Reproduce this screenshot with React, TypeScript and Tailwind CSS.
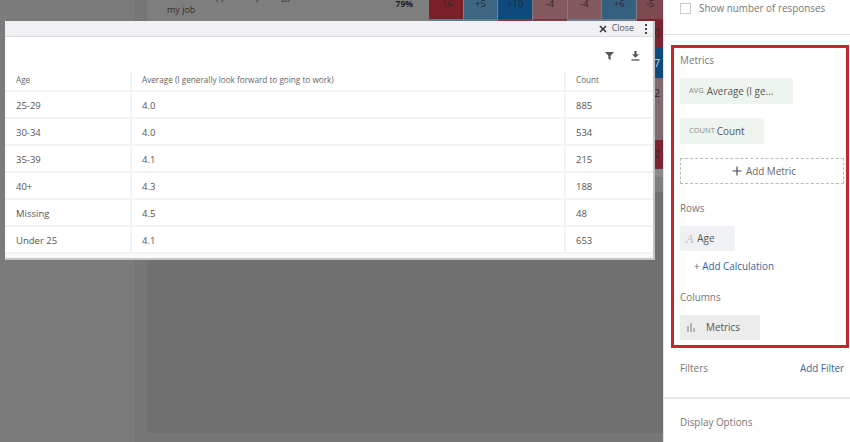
const rows = [
  ["25-29", "4.0", "885"],
  ["30-34", "4.0", "534"],
  ["35-39", "4.1", "215"],
  ["40+", "4.3", "188"],
  ["Missing", "4.5", "48"],
  ["Under 25", "4.1", "653"],
];

const topCells = [
  { t: "-16", c: "flex-1 bg-[#7b2029]" },
  { t: "+5", c: "flex-1 bg-[#3e6682]" },
  { t: "+10", c: "flex-1 bg-[#0e4a7e]" },
  { t: "-4", c: "flex-1 bg-[#82595e]" },
  { t: "-4", c: "flex-1 bg-[#82595e]" },
  { t: "+6", c: "flex-1 bg-[#35607f]" },
  { t: "-5", c: "w-[26px] bg-[#7d4a52]" },
];

const secondCells = ["bg-[#5f7c8c]", "bg-[#5f7c8c]", "bg-[#7b3a44]", "bg-[#7b3a44]", "bg-[#6c7e8a]", "bg-[#6c7e8a]"];

const sideCells = [
  { t: "0", c: "h-[29px] bg-[#7b2432] text-[#2a2a2a]" },
  { t: "7", c: "h-[30px] bg-[#0e4a7e] text-[#d8d8d8]" },
  { t: "2", c: "h-[31px] bg-[#806a6e] text-[#2a2a2a]" },
  { t: "", c: "h-[31px] bg-[#806a6e] text-[#2a2a2a]" },
  { t: "2", c: "h-[29px] bg-[#7b2432] text-[#2a2a2a]" },
  { t: "", c: "h-[8px] bg-[#8a8a8a]" },
];

function FilterIcon() {
  return (
    <svg width="9" height="8" viewBox="0 0 9 8" className="block mt-[1px]">
      <path d="M0 0h9L5.6 3.8V8L3.4 6.8V3.8z" fill="#555" />
    </svg>
  );
}

function DownloadIcon() {
  return (
    <svg width="9" height="10" viewBox="0 0 9 10" className="block">
      <path d="M3.4 0h2.2v3.2H8L4.5 6.8 1 3.2h2.4z" fill="#555" />
      <rect x="0.5" y="8.3" width="8" height="1.3" fill="#555" />
    </svg>
  );
}

function CloseIcon() {
  return (
    <svg width="8" height="8" viewBox="0 0 8 8" className="block">
      <path d="M1 1l6 6M7 1L1 7" stroke="#333" strokeWidth="1.5" />
    </svg>
  );
}

function PlusIcon() {
  return (
    <svg width="10" height="10" viewBox="0 0 10 10" className="block">
      <path d="M5 0.5v9M0.5 5h9" stroke="#444" strokeWidth="1.1" />
    </svg>
  );
}

function BarsIcon() {
  return (
    <svg width="8" height="9" viewBox="0 0 8 9" className="block">
      <rect x="0" y="3" width="2" height="6" fill="#b5b5b5" />
      <rect x="3" y="0" width="2" height="9" fill="#b5b5b5" />
      <rect x="6" y="5" width="2" height="4" fill="#b5b5b5" />
    </svg>
  );
}

function Row({ cells, header }: { cells: string[]; header?: boolean }) {
  const h = header ? "h-[22px] pt-[1px] text-[8.2px] text-[#666]" : "h-[27px] pt-[3px] text-[9.5px] text-[#555]";
  const line = header ? "" : "-mt-[3px] pt-[3px]";
  return (
    <div className={`flex border-b-2 border-[#f3f3f3] ${h}`}>
      <div className={`w-[127px] pl-[11px] flex items-center border-r-2 border-[#f3f3f3] ${line}`}>{cells[0]}</div>
      <div className={`w-[434px] pl-[10px] flex items-center border-r-2 border-[#f3f3f3] ${line}`}>{cells[1]}</div>
      <div className="flex-1 pl-[10px] flex items-center">{cells[2]}</div>
    </div>
  );
}

export default function App() {
  return (
    <div className="relative h-[442px] w-[850px] overflow-hidden flex font-['Open_Sans',sans-serif]">
      <div className="flex flex-1">
        <div className="w-[136px] bg-[#7b7b7b] border-r border-[#727272]" />
        <div className="flex-1 bg-[#767676] pl-[11px] pb-[9px]">
          <div className="h-full bg-[#707070]">
            <div className="h-[192px] bg-[#7e7e7e] flex justify-end">
              <div className="flex-1 h-[19px] overflow-hidden pl-[20px] flex justify-between pr-[16px]">
                <div className="text-[9px] leading-[13px] text-[#2e2e2e]">
                  <div className="-mt-[10px] whitespace-nowrap">I have the opportunity energy in</div>
                  <div>my job</div>
                </div>
                <div className="text-[8.5px] leading-[13px] font-bold text-[#222] -mt-[3px]">79%</div>
              </div>
              <div className="w-[234px]">
                <div className="flex gap-px h-[19px] overflow-hidden">
                  {topCells.map((cell, i) => (
                    <div key={i} className={`${cell.c} text-[9.5px] leading-[13px] text-[#2a2a2a] flex items-start justify-center`}>
                      <span className="-mt-[3px]">{cell.t}</span>
                    </div>
                  ))}
                </div>
                <div className="flex gap-px">
                  <div className="flex-1 flex gap-px h-[29px]">
                    {secondCells.map((c, i) => (
                      <div key={i} className={`flex-1 ${c}`} />
                    ))}
                  </div>
                  <div className="w-[26px] flex flex-col">
                    {sideCells.map((cell, i) => (
                      <div key={i} className={`${cell.c} text-[10px] flex items-center justify-end pr-[3px]`}>{cell.t}</div>
                    ))}
                  </div>
                </div>
              </div>
            </div>
          </div>
        </div>
      </div>

      <aside className="w-[187px] bg-white border-l border-[#e4e4e4] flex flex-col text-[9.9px] text-[#777]">
        <div className="h-[35px] border-b border-[#e2e2e2] flex items-start pl-[16px] pt-[2px] gap-[8px] shrink-0">
          <div className="w-[11px] h-[11px] border border-[#ccc] mt-[1px]" />
          <span className="leading-[13px]">Show number of responses</span>
        </div>
        <div className="ml-[7px] mt-[10px] w-[178px] h-[303px] border-[3px] border-[#c1272d] flex flex-col pl-[6px] pr-[2px] shrink-0">
          <div className="mt-[5px] leading-[14px]">Metrics</div>
          <div className="mt-[11px] w-[113px] h-[26px] rounded-[2px] bg-[#eef5ef] flex items-center pl-[9px] gap-[3px]">
            <span className="text-[7.5px] text-[#888]">AVG</span>
            <span className="text-[#555] whitespace-nowrap">Average (I ge...</span>
          </div>
          <div className="mt-[14px] w-[84px] h-[26px] rounded-[2px] bg-[#eef5ef] flex items-center pl-[9px] gap-[2px]">
            <span className="text-[7.5px] text-[#888]">COUNT</span>
            <span className="text-[#555]">Count</span>
          </div>
          <div className="mt-[14px] w-[164px] h-[26px] border border-dashed border-[#bbb] flex items-center justify-center gap-[4px] pl-[4px] text-[#666]">
            <PlusIcon />
            <span>Add Metric</span>
          </div>
          <div className="mt-[17px] leading-[14px]">Rows</div>
          <div className="mt-[11px] w-[55px] h-[25px] rounded-[2px] bg-[#f0f1f5] flex items-center pl-[6px] gap-[4px]">
            <span className="font-['Liberation_Serif',serif] italic text-[12px] text-[#bbb]">A</span>
            <span className="text-[#555]">Age</span>
          </div>
          <div className="mt-[8px] ml-[14px] leading-[14px] text-[#35649f]">+ Add Calculation</div>
          <div className="mt-[17px] leading-[14px]">Columns</div>
          <div className="mt-[11px] w-[80px] h-[25px] rounded-[2px] bg-[#ececec] flex items-center pl-[7px] gap-[11px]">
            <BarsIcon />
            <span className="text-[#555]">Metrics</span>
          </div>
        </div>
        <div className="flex justify-between pl-[16px] pr-[6px] mt-[13px] leading-[14px] shrink-0">
          <span>Filters</span>
          <span className="text-[#35649f]">Add Filter</span>
        </div>
        <div className="mt-[22px] border-t-2 border-[#e8e8e8] pl-[16px] pt-[16px] leading-[14px]">Display Options</div>
      </aside>

      <div className="absolute left-[5px] top-[21px] w-[650px] h-[239px] bg-white border-b-2 border-r-2 border-[#c6c6c6] flex flex-col">
        <div className="h-[16px] bg-[#f0f0f5] border-b border-[#dcdcdc] flex items-center justify-end shrink-0 text-[8.8px] text-[#555]">
          <CloseIcon />
          <span className="ml-[5px]">Close</span>
          <span className="ml-[11px] mr-[6px] w-[2px] flex flex-col gap-[2px]">
            <span className="block w-[2px] h-[2px] bg-[#444]" />
            <span className="block w-[2px] h-[2px] bg-[#444]" />
            <span className="block w-[2px] h-[2px] bg-[#444]" />
          </span>
        </div>
        <div className="h-[33px] flex items-start justify-end gap-[17px] pr-[13px] pt-[14px] shrink-0">
          <FilterIcon />
          <DownloadIcon />
        </div>
        <Row header cells={["Age", "Average (I generally look forward to going to work)", "Count"]} />
        {rows.map((r) => (
          <Row key={r[0]} cells={r} />
        ))}
        <div className="flex-1 bg-[#fafafa]" />
      </div>
    </div>
  );
}
